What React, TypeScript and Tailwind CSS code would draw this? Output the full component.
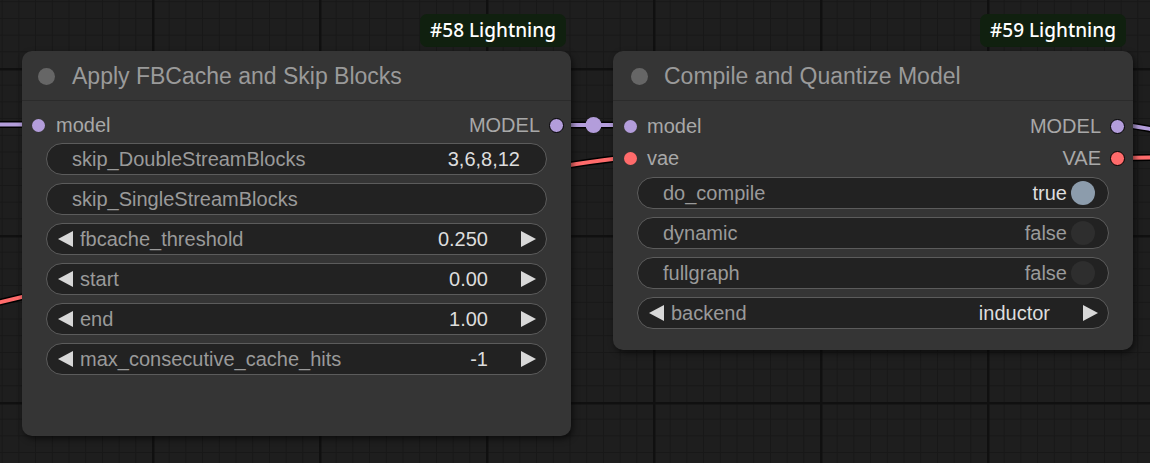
import React from "react";

const F = { fontFamily: "'Liberation Sans', Arial, sans-serif" };

function LeftArrow() {
  return (
    <svg width="16" height="16" viewBox="0 0 16 16" className="shrink-0">
      <polygon points="15,0 15,16 0,8" fill="#d8d8d8" />
    </svg>
  );
}
function RightArrow() {
  return (
    <svg width="16" height="16" viewBox="0 0 16 16" className="shrink-0">
      <polygon points="1,0 1,16 16,8" fill="#d8d8d8" />
    </svg>
  );
}

function TextWidget({ label, value }: { label: string; value?: string }) {
  return (
    <div className="h-[32px] rounded-full border border-[#5c5c5c] bg-[#222222] flex items-center pl-[25px] pr-[26px] text-[20px]">
      <span className="text-[#9a9a9a]">{label}</span>
      <span className="ml-auto text-[#dddddd]">{value}</span>
    </div>
  );
}

function NumberWidget({ label, value }: { label: string; value: string }) {
  return (
    <div className="h-[32px] rounded-full border border-[#5c5c5c] bg-[#222222] flex items-center pl-[11px] pr-[10px] text-[20px]">
      <LeftArrow />
      <span className="ml-[6px] text-[#9a9a9a]">{label}</span>
      <span className="ml-auto text-[#dddddd]">{value}</span>
      <span className="ml-[32px] flex">
        <RightArrow />
      </span>
    </div>
  );
}

function ToggleWidget({ label, on }: { label: string; on: boolean }) {
  return (
    <div className="h-[32px] rounded-full border border-[#5c5c5c] bg-[#222222] flex items-center pl-[25px] pr-[13px] text-[20px]">
      <span className="text-[#9a9a9a]">{label}</span>
      <span className={on ? "ml-auto text-[#dddddd]" : "ml-auto text-[#9a9a9a]"}>{on ? "true" : "false"}</span>
      <span className={on ? "ml-[4px] w-[24px] h-[24px] rounded-full bg-[#8c9cac]" : "ml-[4px] w-[24px] h-[24px] rounded-full bg-[#2e2e2e]"} />
    </div>
  );
}

function InDot({ color }: { color: string }) {
  return <span className={"block w-[13px] h-[13px] rounded-full shrink-0 " + color} />;
}
function OutDot({ color }: { color: string }) {
  return <span className={"block w-[15px] h-[15px] rounded-full shrink-0 border-[1.5px] border-black " + color} />;
}

function Badge({ text }: { text: string }) {
  return (
    <div
      className="h-[33px] px-[10px] rounded-[7px] bg-[#10200f] text-white text-[19px] font-medium flex items-center"
      style={{ fontFamily: "'Noto Sans', 'Open Sans', sans-serif" }}
    >
      {text}
    </div>
  );
}

function Canvas() {
  const small: number[] = [];
  for (let i = 0; i < 10; i++) small.push(i * 16.7);
  return (
    <svg className="absolute inset-0" width="1150" height="463">
      <defs>
        <pattern id="grid" x="152" y="68" width="167" height="167" patternUnits="userSpaceOnUse">
          <rect width="167" height="167" fill="#1e1e1e" />
          {small.map((p) => (
            <g key={p}>
              <line x1={p + 0.5} y1="0" x2={p + 0.5} y2="167" stroke="#171717" strokeWidth="1" />
              <line x1="0" y1={p + 0.5} x2="167" y2={p + 0.5} stroke="#171717" strokeWidth="1" />
            </g>
          ))}
          <line x1="1" y1="0" x2="1" y2="167" stroke="#101010" strokeWidth="3" />
          <line x1="0" y1="1" x2="167" y2="1" stroke="#101010" strokeWidth="3" />
        </pattern>
      </defs>
      <rect width="1150" height="463" fill="url(#grid)" />
      <path d="M -100 325 C 200 260, 450 175, 630 157" fill="none" stroke="#000" strokeWidth="7" />
      <path d="M -100 325 C 200 260, 450 175, 630 157" fill="none" stroke="#ff6b6b" strokeWidth="4" />
      <path d="M -20 124.5 L 38 124.5" fill="none" stroke="#000" strokeWidth="7" />
      <path d="M -20 124.5 L 38 124.5" fill="none" stroke="#b39ddb" strokeWidth="4" />
      <path d="M 557 125 L 630 125" fill="none" stroke="#000" strokeWidth="7" />
      <path d="M 557 125 L 630 125" fill="none" stroke="#b39ddb" strokeWidth="4" />
      <circle cx="593.5" cy="125" r="8" fill="#b39ddb" />
      <path d="M 1118 125 C 1140 125, 1150 131, 1180 133" fill="none" stroke="#000" strokeWidth="7" />
      <path d="M 1118 125 C 1140 125, 1150 131, 1180 133" fill="none" stroke="#b39ddb" strokeWidth="4" />
      <path d="M 1118 158 L 1180 157" fill="none" stroke="#000" strokeWidth="7" />
      <path d="M 1118 158 L 1180 157" fill="none" stroke="#ff6b6b" strokeWidth="4" />
    </svg>
  );
}

export default function App() {
  return (
    <div className="relative w-[1150px] h-[463px] overflow-hidden bg-[#1e1e1e]" style={F}>
      <Canvas />

      <div className="absolute left-[420px] top-[14px]">
        <Badge text="#58 Lightning" />
      </div>
      <div className="absolute left-[22px] top-[51px] w-[549px] h-[385px] rounded-[10px] bg-[#353535] shadow-[2px_3px_6px_rgba(0,0,0,0.55)] flex flex-col">
        <div className="h-[50px] shrink-0 flex items-center pl-[16px] pt-[1px] border-b border-[#2b2b2b]">
          <span className="block w-[17px] h-[17px] rounded-full bg-[#666666]" />
          <span className="ml-[17px] text-[23px] text-[#9a9a9a]">Apply FBCache and Skip Blocks</span>
        </div>
        <div className="pt-[8px] flex flex-col">
          <div className="h-[32px] flex items-center text-[20px] pl-[10px] pr-[7px]">
            <InDot color="bg-[#b39ddb]" />
            <span className="ml-[11px] text-[#a8a8a8]">model</span>
            <span className="ml-auto text-[#a8a8a8]">MODEL</span>
            <span className="ml-[9px] flex">
              <OutDot color="bg-[#b39ddb]" />
            </span>
          </div>
          <div className="mt-[2px] px-[24px] flex flex-col gap-[8px]">
            <TextWidget label="skip_DoubleStreamBlocks" value="3,6,8,12" />
            <TextWidget label="skip_SingleStreamBlocks" />
            <NumberWidget label="fbcache_threshold" value="0.250" />
            <NumberWidget label="start" value="0.00" />
            <NumberWidget label="end" value="1.00" />
            <NumberWidget label="max_consecutive_cache_hits" value="-1" />
          </div>
        </div>
      </div>

      <div className="absolute left-[980px] top-[14px]">
        <Badge text="#59 Lightning" />
      </div>
      <div className="absolute left-[613px] top-[51px] w-[520px] h-[299px] rounded-[10px] bg-[#353535] shadow-[2px_3px_6px_rgba(0,0,0,0.55)] flex flex-col">
        <div className="h-[50px] shrink-0 flex items-center pl-[18px] pt-[1px] border-b border-[#2b2b2b]">
          <span className="block w-[17px] h-[17px] rounded-full bg-[#666666]" />
          <span className="ml-[16px] text-[23px] text-[#9a9a9a]">Compile and Quantize Model</span>
        </div>
        <div className="pt-[9px] flex flex-col">
          <div className="h-[32px] flex items-center text-[20px] pl-[11px] pr-[8px]">
            <InDot color="bg-[#b39ddb]" />
            <span className="ml-[10px] text-[#a8a8a8]">model</span>
            <span className="ml-auto text-[#a8a8a8]">MODEL</span>
            <span className="ml-[9px] flex">
              <OutDot color="bg-[#b39ddb]" />
            </span>
          </div>
          <div className="h-[32px] flex items-center text-[20px] pl-[11px] pr-[8px]">
            <InDot color="bg-[#ff6b6b]" />
            <span className="ml-[10px] text-[#a8a8a8]">vae</span>
            <span className="ml-auto text-[#a8a8a8]">VAE</span>
            <span className="ml-[9px] flex">
              <OutDot color="bg-[#ff6b6b]" />
            </span>
          </div>
          <div className="mt-[3px] px-[24px] flex flex-col gap-[8px]">
            <ToggleWidget label="do_compile" on={true} />
            <ToggleWidget label="dynamic" on={false} />
            <ToggleWidget label="fullgraph" on={false} />
            <div className="h-[32px] rounded-full border border-[#5c5c5c] bg-[#222222] flex items-center pl-[11px] pr-[10px] text-[20px]">
              <LeftArrow />
              <span className="ml-[6px] text-[#9a9a9a]">backend</span>
              <span className="ml-auto text-[#dddddd]">inductor</span>
              <span className="ml-[32px] flex">
                <RightArrow />
              </span>
            </div>
          </div>
        </div>
      </div>
    </div>
  );
}
